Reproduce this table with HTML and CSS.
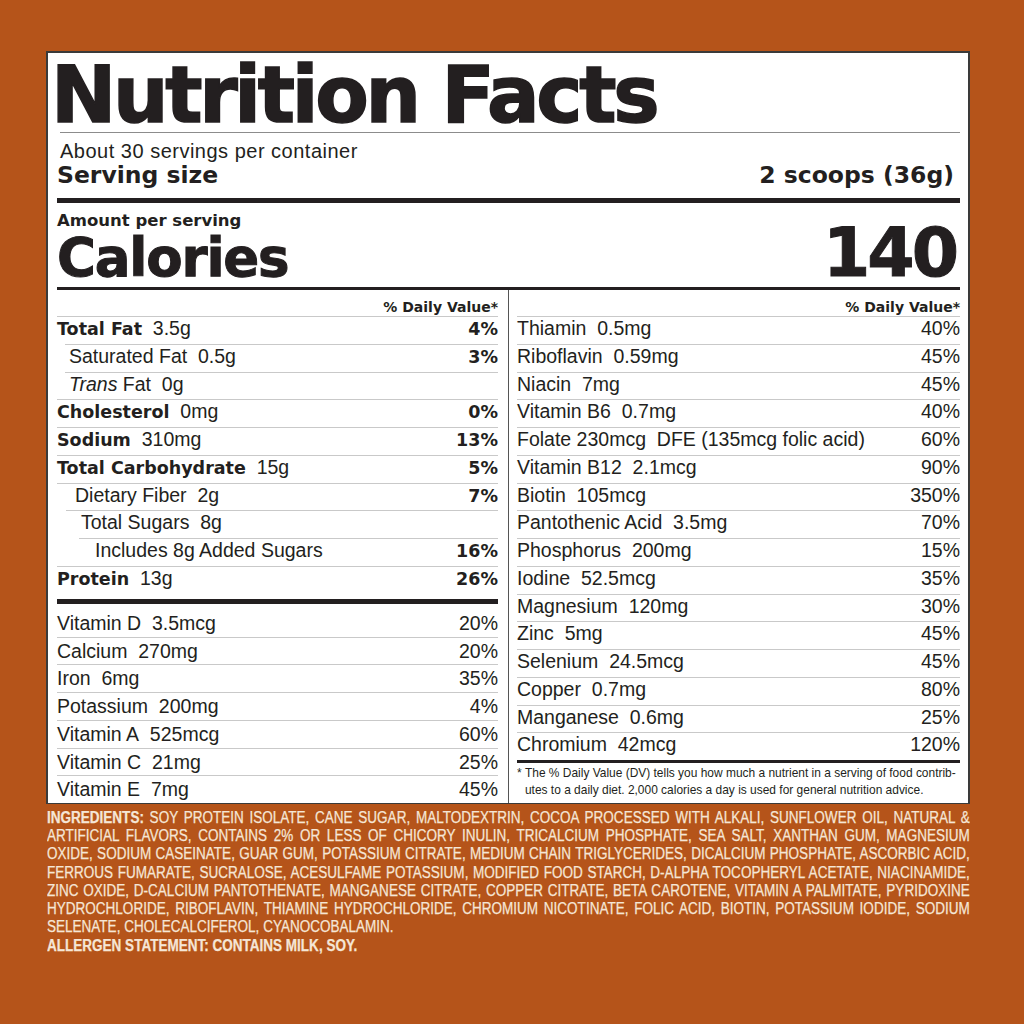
FILE: index.html
```html
<!DOCTYPE html>
<html lang="en">
<head>
<meta charset="utf-8">
<title>Nutrition Facts</title>
<link rel="stylesheet" href="styles.css">
</head>
<body>
<div class="label">
  <h1 class="title"><span>Nutrition Facts</span></h1>
  <div class="servings">About 30 servings per container</div>
  <div class="serving-size"><span>Serving size</span><span>2 scoops (36g)</span></div>
  <div class="bar bar-5"></div>
  <div class="amount">Amount per serving</div>
  <div class="calories"><span class="cal-label">Calories</span><span class="cal-value">140</span></div>
  <div class="bar bar-3"></div>
  <div class="cols">
    <div class="col col-left">
      <div class="dv-head">% Daily Value*</div>
      <div class="row"><span><b>Total Fat</b>&nbsp; 3.5g</span><b>4%</b></div>
      <div class="row sub1"><span>Saturated Fat&nbsp; 0.5g</span><b>3%</b></div>
      <div class="row sub1"><span><i>Trans</i> Fat&nbsp; 0g</span></div>
      <div class="row"><span><b>Cholesterol</b>&nbsp; 0mg</span><b>0%</b></div>
      <div class="row"><span><b>Sodium</b>&nbsp; 310mg</span><b>13%</b></div>
      <div class="row"><span><b>Total Carbohydrate</b>&nbsp; 15g</span><b>5%</b></div>
      <div class="row sub2"><span>Dietary Fiber&nbsp; 2g</span><b>7%</b></div>
      <div class="row sub3"><span>Total Sugars&nbsp; 8g</span></div>
      <div class="row sub4"><span>Includes 8g Added Sugars</span><b>16%</b></div>
      <div class="row"><span><b>Protein</b>&nbsp; 13g</span><b>26%</b></div>
      <div class="bar bar-5 bar-protein"></div>
      <div class="row vit first"><span>Vitamin D&nbsp; 3.5mcg</span><span>20%</span></div>
      <div class="row vit"><span>Calcium&nbsp; 270mg</span><span>20%</span></div>
      <div class="row vit"><span>Iron&nbsp; 6mg</span><span>35%</span></div>
      <div class="row vit"><span>Potassium&nbsp; 200mg</span><span>4%</span></div>
      <div class="row vit"><span>Vitamin A&nbsp; 525mcg</span><span>60%</span></div>
      <div class="row vit"><span>Vitamin C&nbsp; 21mg</span><span>25%</span></div>
      <div class="row vit"><span>Vitamin E&nbsp; 7mg</span><span>45%</span></div>
    </div>
    <div class="col col-right">
      <div class="dv-head">% Daily Value*</div>
      <div class="row"><span>Thiamin&nbsp; 0.5mg</span><span>40%</span></div>
      <div class="row"><span>Riboflavin&nbsp; 0.59mg</span><span>45%</span></div>
      <div class="row"><span>Niacin&nbsp; 7mg</span><span>45%</span></div>
      <div class="row"><span>Vitamin B6&nbsp; 0.7mg</span><span>40%</span></div>
      <div class="row"><span>Folate 230mcg&nbsp; DFE (135mcg folic acid)</span><span>60%</span></div>
      <div class="row"><span>Vitamin B12&nbsp; 2.1mcg</span><span>90%</span></div>
      <div class="row"><span>Biotin&nbsp; 105mcg</span><span>350%</span></div>
      <div class="row"><span>Pantothenic Acid&nbsp; 3.5mg</span><span>70%</span></div>
      <div class="row"><span>Phosphorus&nbsp; 200mg</span><span>15%</span></div>
      <div class="row"><span>Iodine&nbsp; 52.5mcg</span><span>35%</span></div>
      <div class="row"><span>Magnesium&nbsp; 120mg</span><span>30%</span></div>
      <div class="row"><span>Zinc&nbsp; 5mg</span><span>45%</span></div>
      <div class="row"><span>Selenium&nbsp; 24.5mcg</span><span>45%</span></div>
      <div class="row"><span>Copper&nbsp; 0.7mg</span><span>80%</span></div>
      <div class="row"><span>Manganese&nbsp; 0.6mg</span><span>25%</span></div>
      <div class="row"><span>Chromium&nbsp; 42mcg</span><span>120%</span></div>
      <div class="bar bar-3"></div>
      <div class="footnote"><span class="fn-inner"><span class="star">*</span><span class="fn-text">The % Daily Value (DV) tells you how much a nutrient in a serving of food contrib-<br>utes to a daily diet. 2,000 calories a day is used for general nutrition advice.</span></span></div>
    </div>
  </div>
</div>
<div class="ingredients-wrap">
  <div class="ingredients">
    <span class="line"><b>INGREDIENTS:</b> SOY PROTEIN ISOLATE, CANE SUGAR, MALTODEXTRIN, COCOA PROCESSED WITH ALKALI, SUNFLOWER OIL, NATURAL &amp;</span>
    <span class="line">ARTIFICIAL FLAVORS, CONTAINS 2% OR LESS OF CHICORY INULIN, TRICALCIUM PHOSPHATE, SEA SALT, XANTHAN GUM, MAGNESIUM</span>
    <span class="line">OXIDE, SODIUM CASEINATE, GUAR GUM, POTASSIUM CITRATE, MEDIUM CHAIN TRIGLYCERIDES, DICALCIUM PHOSPHATE, ASCORBIC ACID,</span>
    <span class="line">FERROUS FUMARATE, SUCRALOSE, ACESULFAME POTASSIUM, MODIFIED FOOD STARCH, D-ALPHA TOCOPHERYL ACETATE, NIACINAMIDE,</span>
    <span class="line">ZINC OXIDE, D-CALCIUM PANTOTHENATE, MANGANESE CITRATE, COPPER CITRATE, BETA CAROTENE, VITAMIN A PALMITATE, PYRIDOXINE</span>
    <span class="line">HYDROCHLORIDE, RIBOFLAVIN, THIAMINE HYDROCHLORIDE, CHROMIUM NICOTINATE, FOLIC ACID, BIOTIN, POTASSIUM IODIDE, SODIUM</span>
    <span class="line last">SELENATE, CHOLECALCIFEROL, CYANOCOBALAMIN.</span>
    <span class="allergen">ALLERGEN STATEMENT: CONTAINS MILK, SOY.</span>
  </div>
</div>
</body>
</html>
```
FILE: styles.css
```css
html, body {
  margin: 0;
  padding: 0;
}
body {
  background: #b5541a;
  width: 1024px;
  height: 1024px;
  overflow: hidden;
  padding: 51px 0 0 46px;
  box-sizing: border-box;
  color: #231f20;
  font-family: "Liberation Sans", Arial, sans-serif;
}
.label {
  width: 924px;
  box-sizing: border-box;
  background: #fff;
  border: 2px solid #3a3a3a;
  border-bottom-width: 1px;
  padding: 0 8px 0 9px;
}
.title {
  margin: 6px 0 0 3px;
  padding: 0;
  font: 700 78px/73px "DejaVu Sans", sans-serif;
  letter-spacing: -3.3px;
  -webkit-text-stroke: 1.5px #231f20;
  border-bottom: 1px solid #8c8c8c;
  white-space: nowrap;
}
.title span {
  margin-left: -9px;
}
.servings {
  margin: 8px 0 0 3px;
  font-size: 20px;
  line-height: 20px;
  letter-spacing: 0.5px;
}
.serving-size {
  display: flex;
  justify-content: space-between;
  margin-top: 2px;
  padding-right: 6px;
  font: 700 23.5px/24px "DejaVu Sans", sans-serif;
}
.bar {
  background: #231f20;
}
.bar-5 {
  height: 5px;
  margin-top: 11px;
}
.bar-3 {
  height: 3px;
}
.amount {
  margin-top: 10px;
  font: 700 16.5px/15px "DejaVu Sans", sans-serif;
}
.calories {
  display: flex;
  justify-content: space-between;
  align-items: baseline;
  padding-right: 4px;
  margin-bottom: 4px;
  font-family: "DejaVu Sans", sans-serif;
  font-weight: 700;
  line-height: 50px;
  -webkit-text-stroke: 1px #231f20;
}
.cal-label {
  font-size: 53px;
  letter-spacing: -1.2px;
}
.cal-value {
  font-size: 68px;
  letter-spacing: -3px;
}
.cols {
  display: grid;
  grid-template-columns: 452px minmax(0, 1fr);
}
.col {
  min-width: 0;
}
.col-left {
  padding-right: 10px;
  border-right: 1px solid #555;
}
.col-right {
  padding-left: 8px;
}
.dv-head {
  height: 26px;
  box-sizing: border-box;
  padding-top: 8px;
  text-align: right;
  font: 700 14px/18px "DejaVu Sans", sans-serif;
}
.row {
  display: flex;
  justify-content: space-between;
  align-items: baseline;
  height: 27.75px;
  box-sizing: border-box;
  border-top: 1px solid #c9c9c9;
  font-size: 19.5px;
  line-height: 23px;
  white-space: nowrap;
}
.row b {
  font-family: "DejaVu Sans", sans-serif;
  font-size: 17.5px;
  font-weight: 700;
}
.row.sub1 { margin-left: 8px; padding-left: 4px; }
.row.sub2 { padding-left: 18px; }
.row.sub3 { margin-left: 9px; padding-left: 15px; }
.row.sub4 { margin-left: 22px; padding-left: 16px; }
.bar-protein {
  margin-top: 5px;
}
.row.vit {
  line-height: 26px;
}
.row.first {
  border-top: 0;
  height: 33px;
  padding-top: 6px;
}
.footnote {
  margin-top: 1px;
  height: 36px;
  overflow: hidden;
}
.fn-inner {
  display: flex;
  width: 500px;
  transform: scaleX(0.885);
  transform-origin: 0 0;
  font-size: 13.5px;
  line-height: 17px;
  white-space: nowrap;
}
.star {
  width: 9px;
  flex: none;
}
.ingredients-wrap {
  width: 923px;
  margin: 5px 0 0 1px;
  overflow: hidden;
}
.ingredients {
  width: 1092px;
  transform: scaleX(0.845);
  transform-origin: 0 0;
  color: #f5e6d6;
  font-size: 16px;
  line-height: 18.2px;
  word-spacing: -2px;
  -webkit-text-stroke: 0.25px #f5e6d6;
}
.line {
  display: block;
  text-align: justify;
  text-align-last: justify;
}
.line.last {
  text-align-last: left;
  word-spacing: 0;
}
.allergen {
  display: block;
  margin-top: 1px;
  font-weight: 700;
  word-spacing: 0;
}
```
